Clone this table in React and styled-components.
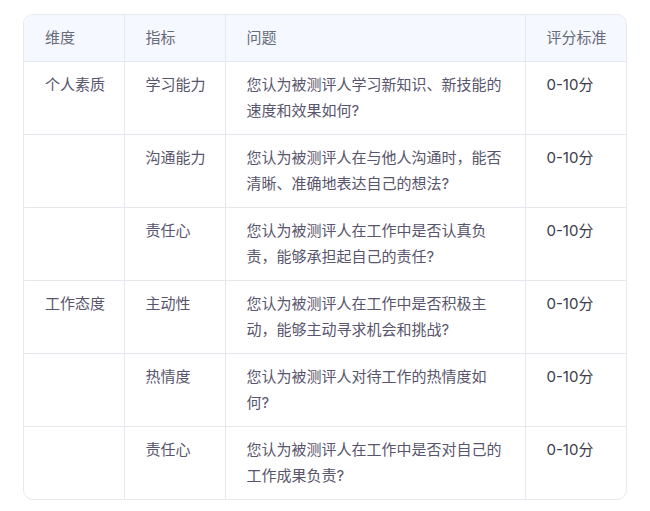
import React from "react";
import styled, { createGlobalStyle } from "styled-components";

const Global = createGlobalStyle`
  html, body { margin: 0; padding: 0; background: #ffffff; }
  body { font-family: "Inter", "Noto Sans CJK SC", sans-serif; }
  *, *::before, *::after { box-sizing: border-box; }
`;

const Page = styled.div`
  padding: 14px 23px 12px 23px;
`;

const Frame = styled.div`
  border: 1px solid #e6e8ef;
  border-radius: 10px;
  overflow: hidden;
`;

const Table = styled.table`
  width: 100%;
  border-collapse: collapse;
  table-layout: fixed;
  font-size: 15px;
  line-height: 26px;
`;

const HeadRow = styled.tr`
  background: #f5f8ff;
`;

const HeadCell = styled.th`
  text-align: left;
  font-weight: 400;
  color: #676b7a;
  padding: 10px 18px 10px 21px;
  border-bottom: 1px solid #e6e8ef;
  border-left: 1px solid #e6e8ef;
  width: ${(p) => (p.$w ? `${p.$w}px` : "auto")};
  white-space: nowrap;
  &:first-child { border-left: none; }
`;

const Row = styled.tr`
  & + & td { border-top: 1px solid #e6e8ef; }
`;

const Cell = styled.td`
  vertical-align: top;
  padding: 10px 18px 10px 21px;
  color: ${(p) => (p.$strong ? "#3b3b4a" : "#58556c")};
  border-left: 1px solid #e6e8ef;
  &:first-child { border-left: none; }
`;

const rows = [
  ["个人素质", "学习能力", "您认为被测评人学习新知识、新技能的速度和效果如何?"],
  ["", "沟通能力", "您认为被测评人在与他人沟通时，能否清晰、准确地表达自己的想法?"],
  ["", "责任心", "您认为被测评人在工作中是否认真负责，能够承担起自己的责任?"],
  ["工作态度", "主动性", "您认为被测评人在工作中是否积极主动，能够主动寻求机会和挑战?"],
  ["", "热情度", "您认为被测评人对待工作的热情度如何?"],
  ["", "责任心", "您认为被测评人在工作中是否对自己的工作成果负责?"],
];

export default function App() {
  return (
    <Page>
      <Global />
      <Frame>
        <Table>
          <thead>
            <HeadRow>
              <HeadCell $w={100}>维度</HeadCell>
              <HeadCell $w={101}>指标</HeadCell>
              <HeadCell $w={300}>问题</HeadCell>
              <HeadCell>评分标准</HeadCell>
            </HeadRow>
          </thead>
          <tbody>
            {rows.map((r, i) => (
              <Row key={i}>
                <Cell>{r[0]}</Cell>
                <Cell>{r[1]}</Cell>
                <Cell>{r[2]}</Cell>
                <Cell $strong>0-10分</Cell>
              </Row>
            ))}
          </tbody>
        </Table>
      </Frame>
    </Page>
  );
}
